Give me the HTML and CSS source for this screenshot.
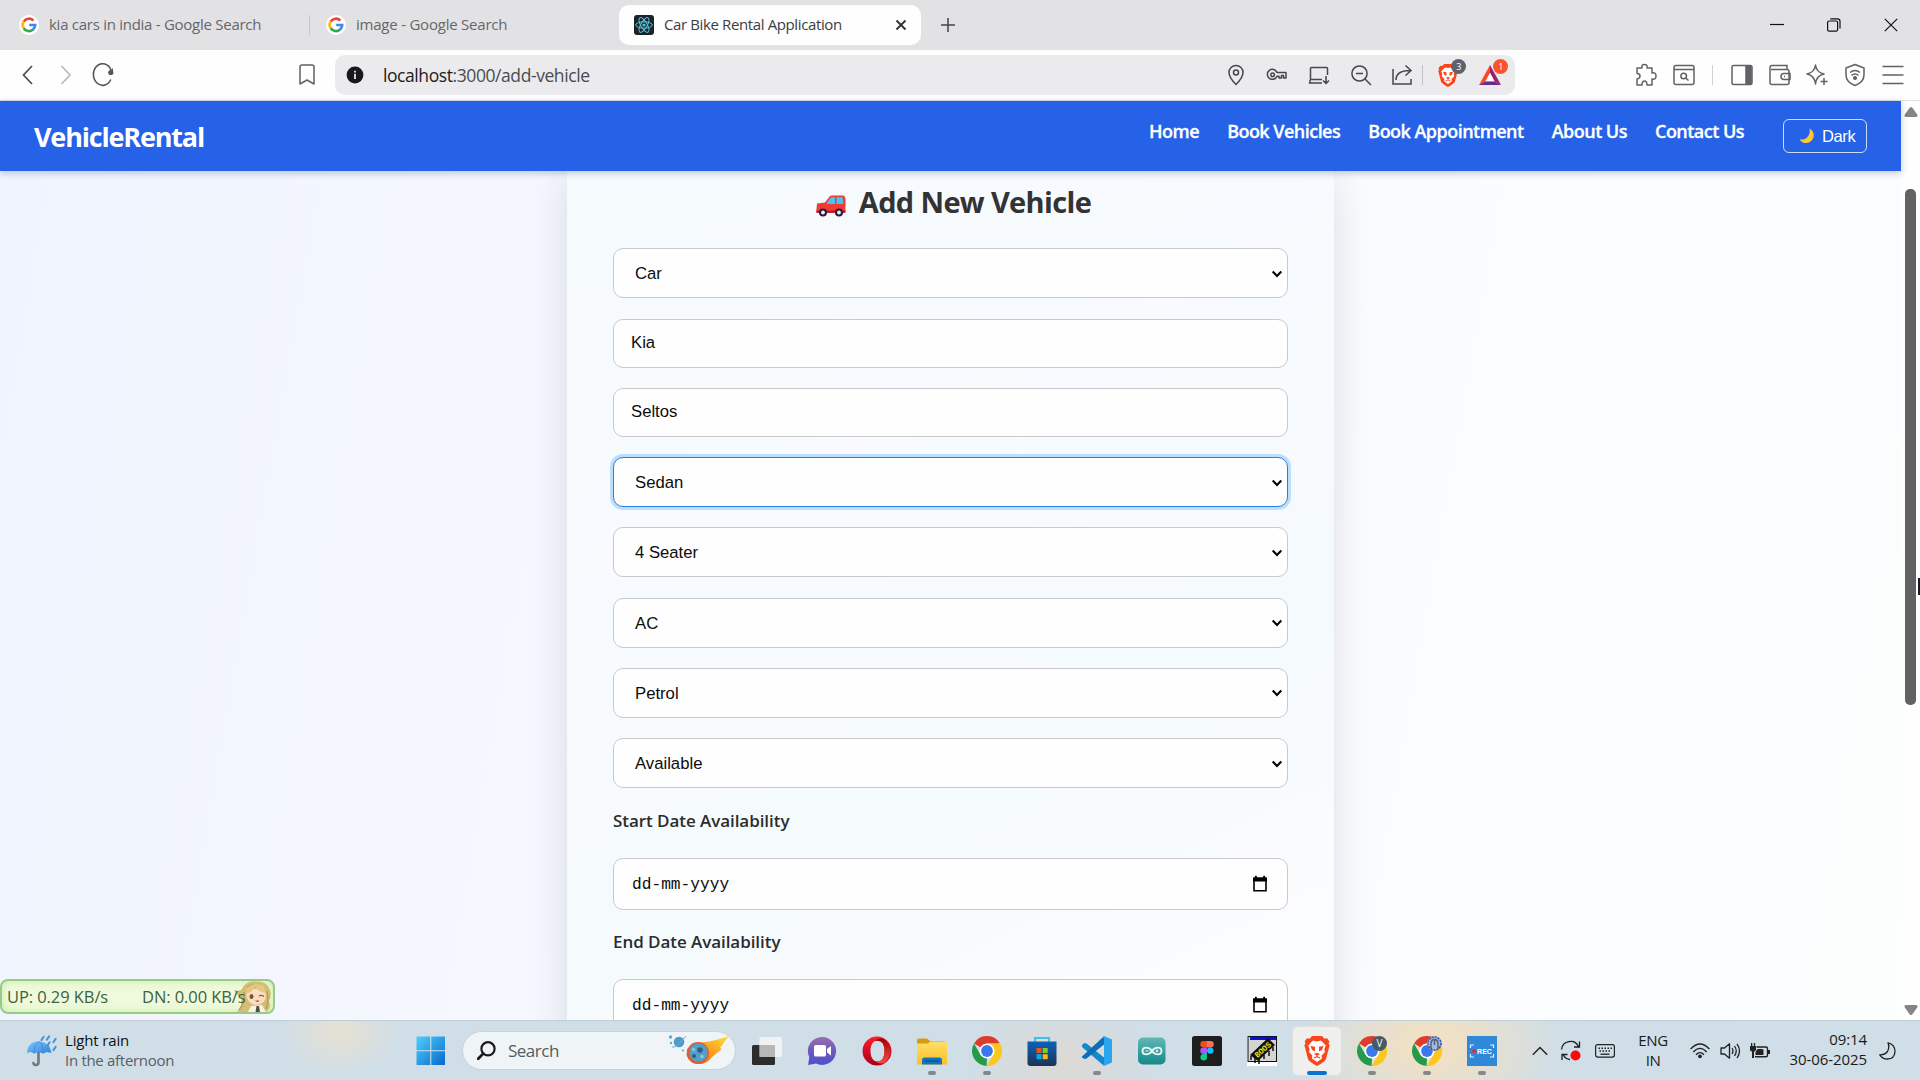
FILE: index.html
```html
<!DOCTYPE html>
<html lang="en">
<head>
<meta charset="utf-8">
<title>Car Bike Rental Application</title>
<link rel="stylesheet" href="styles.css">
</head>
<body>
<svg class="defs" width="0" height="0" aria-hidden="true">
  <defs>
    <linearGradient id="gWin" x1="0" y1="0" x2="1" y2="1"><stop offset="0" stop-color="#4fd0fb"/><stop offset="1" stop-color="#0669cc"/></linearGradient>
    <linearGradient id="gBlue" x1="0" y1="0" x2="0" y2="1"><stop offset="0" stop-color="#0d62b4"/><stop offset="1" stop-color="#1c3358"/></linearGradient>
    <linearGradient id="gChat" x1="0" y1="0" x2="0" y2="1"><stop offset="0" stop-color="#9a6cab"/><stop offset=".5" stop-color="#6a5bbd"/><stop offset="1" stop-color="#4d4fd0"/></linearGradient>
    <linearGradient id="gOpera" x1="0" y1="0" x2="0" y2="1"><stop offset="0" stop-color="#ff1b2d"/><stop offset="1" stop-color="#a70014"/></linearGradient>
    <linearGradient id="gOpera2" x1="0" y1="0" x2="0" y2="1"><stop offset="0" stop-color="#9c0000"/><stop offset="1" stop-color="#ff4b4b"/></linearGradient>
    <linearGradient id="gFolder" x1="0" y1="0" x2="0" y2="1"><stop offset="0" stop-color="#ffdf6b"/><stop offset="1" stop-color="#fbbf25"/></linearGradient>
    <linearGradient id="gArd" x1="0" y1="0" x2="0" y2="1"><stop offset="0" stop-color="#62b8b4"/><stop offset="1" stop-color="#128a88"/></linearGradient>
    <linearGradient id="gFire" x1="0" y1="1" x2="1" y2="0"><stop offset="0" stop-color="#e8552b"/><stop offset=".5" stop-color="#fb9d1e"/><stop offset="1" stop-color="#ffe23a"/></linearGradient>
    <linearGradient id="gUmb" x1="0" y1="0" x2="1" y2="1"><stop offset="0" stop-color="#7fc4fb"/><stop offset="1" stop-color="#2e83e0"/></linearGradient>
    <symbol id="google" viewBox="0 0 20 20">
      <circle cx="10" cy="10" r="10" fill="#fff"/>
      <path d="M4.7 6.6A6.2 6.2 0 0 1 14.4 5.6" fill="none" stroke="#ea4335" stroke-width="2.7"/>
      <path d="M4.7 13.3A6.2 6.2 0 0 1 4.7 6.6" fill="none" stroke="#fbbc05" stroke-width="2.7"/>
      <path d="M14 14.6A6.2 6.2 0 0 1 4.7 13.2" fill="none" stroke="#34a853" stroke-width="2.7"/>
      <path d="M10.2 10H16.2A6.1 6.1 0 0 1 13.9 14.6" fill="none" stroke="#4285f4" stroke-width="2.7"/>
    </symbol>
    <symbol id="chrome" viewBox="0 0 30 30">
      <path d="M15 15L2 7.5A15 15 0 0 1 28 7.5H15Z" fill="#dd3b2b"/>
      <path d="M2 7.5L8.5 18.8L15 22.5L14.6 30A15 15 0 0 1 2 7.5Z" fill="#26994a"/>
      <path d="M28 7.5A15 15 0 0 1 14.6 30L21.5 18.8L15 7.5Z" fill="#fdc61f"/>
      <circle cx="15" cy="15" r="7.5" fill="#fff"/><circle cx="15" cy="15" r="5.9" fill="#3a78ef"/>
    </symbol>
    <symbol id="brave" viewBox="0 0 26 30">
      <path d="M8 0H18L20.5 2.7L23 2.3L25.3 5.2L24.6 7.5L25.6 9.6L22 23Q21 25.5 13 30Q5 25.5 4 23L.4 9.6L1.4 7.5L.7 5.2L3 2.3L5.5 2.7Z" fill="#f9471d"/>
      <path d="M9 4.6L13 5.4L17 4.6L21.8 9.5L20.3 13.2L21 16L17.6 19.5L18 22.5L13 26L8 22.5L8.4 19.5L5 16L5.7 13.2L4.2 9.5Z" fill="#fff"/>
      <path d="M6.5 10L11 10.8L11 15.5L8 14ZM19.5 10L15 10.8V15.5L18 14ZM10 18L13 16.8L16 18L13 20Z" fill="#f9471d"/>
      <path d="M9.8 22L13 20.6L16.2 22" fill="none" stroke="#f9471d" stroke-width="1.2"/>
    </symbol>
    <symbol id="chev" viewBox="0 0 12 8"><path d="M1.7 1.6L6 5.9L10.3 1.6" fill="none" stroke="#000" stroke-width="2.1"/></symbol>
    <symbol id="cal" viewBox="0 0 16 18"><path d="M2 4.5V15.8H14V4.5" fill="none" stroke="#000" stroke-width="1.6"/><path d="M1 2.2H3V.8H4.8V2.2H11.2V.8H13V2.2H15V6.4H1Z"/></symbol>
  </defs>
</svg>

<div class="screen">
  <header class="tabs">
    <div class="tab tab-first"><svg class="fav"><use href="#google"/></svg><span class="t1">kia cars in india - Google Search</span></div>
    <i class="tab-sep"></i>
    <div class="tab tab-second"><svg class="fav"><use href="#google"/></svg><span class="t2">image - Google Search</span></div>
    <div class="tab tab-active">
      <svg class="fav" viewBox="0 0 20 20"><rect width="20" height="20" rx="3" fill="#1c2428"/><g fill="none" stroke="#58c4dc" stroke-width="1"><ellipse cx="10" cy="10" rx="8.3" ry="3.2"/><ellipse cx="10" cy="10" rx="8.3" ry="3.2" transform="rotate(60 10 10)"/><ellipse cx="10" cy="10" rx="8.3" ry="3.2" transform="rotate(120 10 10)"/></g><circle cx="10" cy="10" r="1.6" fill="#58c4dc"/></svg>
      <span class="t3">Car Bike Rental Application</span>
      <svg class="tab-x" width="12" height="12" viewBox="0 0 12 12"><path d="M1.5 1.5L10.5 10.5M10.5 1.5L1.5 10.5" stroke="#333" stroke-width="1.9"/></svg>
    </div>
    <svg class="plus" width="14" height="14" viewBox="0 0 14 14"><path d="M7 0V14M0 7H14" stroke="#444" stroke-width="1.5"/></svg>
    <div class="win">
      <svg width="14" height="14" viewBox="0 0 14 14"><path d="M0 6.5H14" stroke="#111" stroke-width="1.2"/></svg>
      <svg width="14" height="14" viewBox="0 0 14 14" fill="none" stroke="#111" stroke-width="1.2"><rect x=".6" y="3" width="10" height="10.2" rx="1.5"/><path d="M3.3 .8H10.5Q13 .8 13 3.3V10.4"/></svg>
      <svg width="14" height="14" viewBox="0 0 14 14"><path d="M.8 .8L13.2 13.2M13.2 .8L.8 13.2" stroke="#111" stroke-width="1.2"/></svg>
    </div>
  </header>

  <div class="toolbar">
    <div class="navicons">
      <svg width="12" height="20" viewBox="0 0 12 20"><path d="M10 1L1.5 10L10 19" fill="none" stroke="#494c50" stroke-width="1.7"/></svg>
      <svg width="12" height="20" viewBox="0 0 12 20"><path d="M1.5 1L10 10L1.5 19" fill="none" stroke="#bbb" stroke-width="1.7"/></svg>
      <svg width="22" height="24" viewBox="0 0 22 24"><path d="M18.800 16.500A9.200 10.800 0 1 1 19 7" fill="none" stroke="#55585c" stroke-width="1.6"/><circle cx="18.800" cy="9.500" r="2.600" fill="#55585c"/><path d="M21 5V10H16Z" fill="#55585c"/></svg>
    </div>
    <svg class="bookmark" width="16" height="22" viewBox="0 0 16 22"><path d="M1 3Q1 1 3 1H13Q15 1 15 3V20L8 16L1 20Z" fill="none" stroke="#606266" stroke-width="1.5" stroke-linejoin="round"/></svg>
    <div class="url">
      <svg width="18" height="18" viewBox="0 0 18 18"><circle cx="9" cy="9" r="8.4" fill="#18191d"/><path d="M9 7.8V13M9 4.8V6.4" stroke="#e6e6e8" stroke-width="1.8"/></svg>
      <span class="addr"><b>localhost</b>:3000/add-vehicle</span>
      <div class="urlicons">
        <svg width="22" height="22" viewBox="0 0 22 22"><path d="M11 20.5Q4 13.5 4 8.5A7 7 0 0 1 18 8.5Q18 13.5 11 20.5Z"/><circle cx="11" cy="8.6" r="2.5"/></svg>
        <svg width="22" height="22" viewBox="0 0 22 22"><path d="M11 8.5H20V14H17.5V11.5H15.5V14H13V12.2H11A5 5 0 1 1 11 8.5Z" stroke-linejoin="round"/><circle cx="6.6" cy="10.8" r="1.8"/></svg>
        <svg width="22" height="22" viewBox="0 0 22 22"><path d="M19.5 11V4.5Q19.5 3.5 18.500 3.500H3.500Q2.500 3.500 2.500 4.500V15.500H14M.8 19H14M2 16V19M18 12V19M15 16.500L18 19.500L21 16.500"/></svg>
        <svg width="22" height="22" viewBox="0 0 22 22"><circle cx="9.500" cy="9.500" r="7.600"/><path d="M15 15L21 21M6 9.500H13"/></svg>
        <svg width="22" height="22" viewBox="0 0 22 22"><path d="M2 5V20H20V15M5 16Q5 6.500 19 6.500M14.500 1.500L20 6.500L14.500 11.500"/></svg>
      </div>
      <i class="url-sep"></i>
      <div class="badge-wrap brv"><svg width="20" height="25"><use href="#brave"/></svg><em class="badge grey">3</em></div>
      <div class="badge-wrap bat"><svg width="22" height="20" viewBox="0 0 22 20"><path d="M11 0L0 20L6.500 16.200L11 8Z" fill="#ff4724"/><path d="M11 0L22 20L15.500 16.200L11 8Z" fill="#9e1f63"/><path d="M0 20H22L15.500 16.200H6.500Z" fill="#662d91"/><path d="M11 8L6.500 16.200H15.500Z" fill="#fff"/></svg><em class="badge red">1</em></div>
    </div>
    <div class="exticons">
      <svg width="22" height="24" viewBox="0 0 22 24"><path d="M2 5H7Q6 1.500 9.500 1.500T12 5H17V10Q21 9 21 13T17 16V22H12Q12 18 9.500 18T7 22H2V16Q5 15.500 5 13T2 10.500Z" stroke-linejoin="round"/></svg>
      <svg width="22" height="22" viewBox="0 0 22 22"><rect x="1" y="1.500" width="20" height="19" rx="2"/><path d="M1 5.500H21M12.800 14L15.500 16.500"/><circle cx="10.700" cy="12" r="2.800"/></svg>
      <i class="ext-sep"></i>
      <svg width="22" height="22" viewBox="0 0 22 22"><rect x="1" y="1.500" width="20" height="19" rx="1.500"/><path d="M15 2H20V20H15Z" fill="#606266"/></svg>
      <svg width="22" height="22" viewBox="0 0 22 22"><path d="M18 5.500V1.500H3Q1 1.500 1 3.500V18.500Q1 20.500 3 20.500H18Q20 20.500 20 18.500V7.500Q20 5.500 18 5.500H2"/><path d="M21 9.500H15Q12 9.500 12 12.500T15 15.500H21ZM15 12.500H16"/></svg>
      <svg width="22" height="22" viewBox="0 0 22 22"><path d="M9.500 1Q10.500 8.500 18 10Q10.500 11.500 9.500 20Q8.500 11.500 1 10Q8.500 8.500 9.500 1ZM18 14V21M14.500 17.500H21.500" stroke-linejoin="round"/></svg>
      <svg width="22" height="24" viewBox="0 0 22 24"><path d="M11 1.500L20 5V12Q20 19 11 22.500Q2 19 2 12V5Z" stroke-linejoin="round"/><path d="M6 9.500Q11 5.500 16 9.500M7.500 12.300Q11 9.500 14.500 12.300"/><circle cx="11" cy="15" r="1.300" fill="#606266"/></svg>
      <svg width="22" height="20" viewBox="0 0 22 20"><path d="M.5 1.500H21.500M.5 10H21.500M.5 18.500H21.500"/></svg>
    </div>
  </div>

  <div class="viewport">
    <div class="page">
      <nav class="navbar">
        <div class="brand">VehicleRental</div>
        <div class="links"><a>Home</a><a>Book Vehicles</a><a>Book Appointment</a><a>About Us</a><a>Contact Us</a></div>
        <div class="theme"><svg width="16" height="16" viewBox="0 0 16 16"><path d="M10.500 .5Q16.500 4.500 14 10.500Q10.500 16.500 4 14.500Q1.500 13.500 .8 11.200Q6 12.500 9 8.500Q11.500 5 10.500 .5Z" fill="#fcc934"/></svg><span>Dark</span></div>
      </nav>
      <main class="content">
        <form class="card">
          <h1><svg width="30" height="22" viewBox="0 0 30 22"><path d="M1 8.500L9 7.500L14 1Q14.500 .5 16 .5H27Q29 .5 29.500 4V16L28.500 18H1Q.3 18 .3 16Z" fill="#f03a36"/><path d="M11 7.800L15 2.300H19V9H11ZM20.500 2.300H26.500L27.500 9H20.500Z" fill="#4cc5ee"/><path d="M.5 15.500H29.500V17.800H.5Z" fill="#b8202c"/><circle cx="7" cy="17.500" r="4" fill="#2c1a3a"/><circle cx="23" cy="17.500" r="4" fill="#2c1a3a"/><circle cx="7" cy="17.500" r="1.900" fill="#f2eef8"/><circle cx="23" cy="17.500" r="1.900" fill="#f2eef8"/></svg><span>Add New Vehicle</span></h1>
          <div class="field sel"><span>Car</span><svg><use href="#chev"/></svg></div>
          <div class="field txt first"><span>Kia</span></div>
          <div class="field txt"><span>Seltos</span></div>
          <div class="field sel focus"><span>Sedan</span><svg><use href="#chev"/></svg></div>
          <div class="field sel"><span>4 Seater</span><svg><use href="#chev"/></svg></div>
          <div class="field sel"><span>AC</span><svg><use href="#chev"/></svg></div>
          <div class="field sel"><span>Petrol</span><svg><use href="#chev"/></svg></div>
          <div class="field sel"><span>Available</span><svg><use href="#chev"/></svg></div>
          <label class="start-label">Start Date Availability</label>
          <div class="field date"><span>dd-mm-yyyy</span><svg><use href="#cal"/></svg></div>
          <label>End Date Availability</label>
          <div class="field date"><span>dd-mm-yyyy</span><svg><use href="#cal"/></svg></div>
        </form>
      </main>
    </div>
    <div class="scrollbar">
      <svg width="14" height="10" viewBox="0 0 14 10"><path d="M7 0Q8 0 9 1.500L13.500 8Q14 10 12 10H2Q0 10 .5 8L5 1.500Q6 0 7 0Z" fill="#858585"/></svg>
      <i class="thumb"></i>
      <svg width="14" height="10" viewBox="0 0 14 10"><path d="M7 10Q8 10 9 8.500L13.500 2Q14 0 12 0H2Q0 0 .5 2L5 8.500Q6 10 7 10Z" fill="#858585"/></svg>
    </div>
  </div>

  <footer class="taskbar">
    <div class="weather">
      <svg width="32" height="32" viewBox="0 0 32 32"><path d="M12.500 17V27Q12.500 30 9.800 30T7.500 27" fill="none" stroke="#777" stroke-width="2.600"/><path d="M1 18Q2 6 13 6.500Q24 7 25.500 18L21 17L17 18.500L12.500 17L8 18.500L4.500 17Z" fill="url(#gUmb)"/><path d="M8 18.500Q8 9 13 6.500Q17.500 9 17 18.500" fill="none" stroke="#3c87d8" stroke-width=".7"/><path d="M17.500 2L15.500 5M23 1.500L21 4.500M29.500 4L27.500 7M23.500 7.500L21.500 10.500M29.500 12L27.500 15" stroke="#4b93d8" stroke-width="2.200" stroke-linecap="round"/></svg>
      <div class="wtext"><span class="w1">Light rain</span><span class="w2">In the afternoon</span></div>
    </div>
    <svg class="start" width="30" height="30" viewBox="0 0 30 30"><path d="M.5 .5H14.200V14.200H.5ZM15.300 .5H29V14.200H15.300ZM.5 15.300H14.200V29H.5ZM15.300 15.300H29V29H15.300Z" fill="url(#gWin)"/></svg>
    <div class="search">
      <svg width="19" height="19" viewBox="0 0 19 19"><circle cx="11" cy="7.800" r="6.600" fill="none" stroke="#1b1b1b" stroke-width="2.200"/><path d="M6.200 12.600L1.200 17.800" stroke="#1b1b1b" stroke-width="2.800" stroke-linecap="round"/></svg>
      <span>Search</span>
      <svg class="meteor" width="62" height="32" viewBox="0 0 62 32"><path d="M19 14Q26 7 38 7Q46 6 61 1Q57 6 52 13L54 14Q49 18 44 22Q39 29 32 29Q21 29 18.500 20Z" fill="url(#gFire)"/><circle cx="30" cy="18" r="11" fill="#e25a30"/><circle cx="30.500" cy="17.500" r="9.200" fill="#559fc4"/><circle cx="32" cy="15" r="2.800" fill="#315c86"/><circle cx="26" cy="21" r="2" fill="#315c86"/><circle cx="34" cy="21.500" r="1.700" fill="#8bd0e6"/><circle cx="25.500" cy="14.500" r="2" fill="#80bfdf"/><circle cx="11" cy="7" r="5.300" fill="#4c9bc8"/><path d="M4 12Q7 14 18 1" fill="none" stroke="#6eabca" stroke-width="1"/><circle cx="2.500" cy="2" r="1.700" fill="#5faace"/><circle cx="3" cy="8" r="1.200" fill="#5faace"/><circle cx="15" cy="15.500" r="1.100" fill="#5faace"/></svg>
    </div>
    <div class="apps">
      <div class="app"><svg width="30" height="30" viewBox="0 0 30 30"><rect y="9" width="23" height="20" rx="1.500" fill="#2c2c2c"/><rect x="7.500" y="1" width="22.500" height="20" rx="1.500" fill="#fafafa" opacity=".72"/><path d="M7.500 9H23V21H7.500Z" fill="#b4b4b4" opacity=".8"/></svg></div>
      <div class="app"><svg width="30" height="30" viewBox="0 0 30 30"><path d="M15 1A14 14 0 1 1 9 27.600L1.200 29L2.200 21A14 14 0 0 1 15 1Z" fill="url(#gChat)"/><rect x="7" y="9" width="12" height="11.500" rx="1.500" fill="#fff"/><path d="M20 13L24 10V19.500L20 16.500Z" fill="#fff"/></svg></div>
      <div class="app"><svg width="30" height="30" viewBox="0 0 30 30"><path fill-rule="evenodd" d="M15 .5A14.500 14.500 0 0 1 15 29.500A14.500 14.500 0 0 1 15 .5ZM15.500 4.500C11 4.500 8.500 9 8.500 15S11 25.500 15.500 25.500S22.500 21 22.500 15S20 4.500 15.500 4.500Z" fill="url(#gOpera)"/><path d="M13 5Q17 1.500 22 3A14.500 14.500 0 0 1 22 27Q17 28.500 13 25Q22.500 27 22.500 15T13 5Z" fill="url(#gOpera2)"/></svg></div>
      <div class="app run"><svg width="30" height="30" viewBox="0 0 30 30"><path d="M0 4Q0 2.500 1.500 2.500H10L13 5H28V8H0Z" fill="#d69c10"/><path d="M0 7.500H11L13.500 5.500H30V28.500H0Z" fill="url(#gFolder)"/><path d="M5 28.500V24Q5 21.500 7.500 21.500H22.500Q25 21.500 25 24V28.500Z" fill="#1272c0"/><path d="M8 25H22" stroke="#064b86"/></svg></div>
      <div class="app run"><svg width="30" height="30"><use href="#chrome"/></svg></div>
      <div class="app"><svg width="30" height="30" viewBox="0 0 30 30"><path d="M8 7V2H22V7" fill="none" stroke="#3cc0f0" stroke-width="2.200"/><path d="M.5 5.500H29.500V27Q29.500 30 26.500 30H3.500Q.5 30 .5 27Z" fill="url(#gBlue)"/><path d="M9.500 12H14.500V17H9.500Z" fill="#f1511b"/><path d="M15.700 12H20.700V17H15.700Z" fill="#80cc28"/><path d="M9.500 18.200H14.500V23.200H9.500Z" fill="#00adef"/><path d="M15.700 18.200H20.700V23.200H15.700Z" fill="#fbbc09"/></svg></div>
      <div class="app run"><svg width="30" height="30" viewBox="0 0 30 30"><path d="M0 9L2.500 7L4.500 7.500L22 21.500V28L21 29L0 11Z" fill="#1587cf"/><path d="M0 20.500L22 .3V8.500L4.500 22.500L2.500 23L0 21.500Z" fill="#0d6db5"/><path d="M22 0L30 3.500V26.500L22 30L20.500 29L22 27.500V2.500L20.500 1Z" fill="#2aa5ee"/></svg></div>
      <div class="app"><svg width="30" height="30" viewBox="0 0 30 30"><rect x="1" y="1.500" width="27.500" height="27" rx="5" fill="url(#gArd)"/><path d="M15 15C12 10.500 5.500 10.500 5.500 15S12 19.500 15 15S24.500 10.500 24.500 15S18 19.500 15 15Z" fill="none" stroke="#eafafa" stroke-width="1.800"/><path d="M8.500 15H11.500M18.500 15H21.500M20 13.500V16.500" stroke="#eafafa"/></svg></div>
      <div class="app"><svg width="30" height="30" viewBox="0 0 30 30"><rect width="30" height="30" rx="2.500" fill="#1e1e1e"/><path d="M15 5H11.500A3.200 3.200 0 0 0 11.500 11.400H15Z" fill="#f24e1e"/><path d="M15 5H18.500A3.200 3.200 0 0 1 18.500 11.400H15Z" fill="#ff7262"/><path d="M15 11.400H11.500A3.200 3.200 0 0 0 11.500 17.900H15Z" fill="#a259ff"/><circle cx="18.300" cy="14.600" r="3.200" fill="#1abcfe"/><path d="M15 17.900H11.500A3.300 3.300 0 1 0 15 21.200Z" fill="#0acf83"/></svg></div>
      <div class="app"><svg width="30" height="30" viewBox="0 0 30 30"><rect width="30" height="30" fill="#fff"/><rect x="1" y=".5" width="28.500" height="25" fill="#d4d4d4" stroke="#111"/><path d="M3 .8H29V4H3Z" fill="#0710d8"/><path d="M3 19L21 2L28 9L11 25Z" fill="#111"/><path d="M4 20V24M8 22V27M12 23V28M17 19V23M22 15V20M26 11V15" stroke="#111" stroke-width="1.500"/><text class="chip" x="-9.500" y="3" transform="translate(15.500 13.500) rotate(-42)">BOOS</text></svg></div>
      <div class="app active"><svg width="26" height="30"><use href="#brave"/></svg></div>
      <div class="app run"><svg width="30" height="30" viewBox="0 0 30 30"><use href="#chrome" width="30" height="30"/><circle cx="22.500" cy="7.500" r="7.500" fill="#445a64"/><text class="av" x="22.500" y="10.800">V</text></svg></div>
      <div class="app run"><svg width="30" height="30" viewBox="0 0 30 30"><use href="#chrome" width="30" height="30"/><circle cx="22.500" cy="7.500" r="7.300" fill="#a9b8dc"/><circle cx="22.500" cy="7.500" r="6.500" fill="none" stroke="#2f55ad" stroke-width="1.600" stroke-dasharray="2 1"/><path d="M19 13V8Q19 3.500 22.500 3.500T26 8V13M22.500 3V9" fill="none" stroke="#52617f" stroke-width="1.500"/></svg></div>
      <div class="app run"><svg width="30" height="30" viewBox="0 0 30 30"><rect width="30" height="30" fill="#3088d8"/><path d="M3.500 12V9H7M23 9H26.500V12M3.500 18V21H7M23 21H26.500V18" fill="none" stroke="#e6f1fb" stroke-width="1.200"/><circle cx="7" cy="15" r="2.100" fill="#e62d2d"/><text class="rec" x="17.500" y="17.500">REC</text></svg></div>
    </div>
    <div class="tray">
      <svg width="16" height="10" viewBox="0 0 16 10"><path d="M.8 8.800L8 1.500L15.200 8.800" fill="none" stroke="#222" stroke-width="1.400"/></svg>
      <svg class="sync" width="22" height="22" viewBox="0 0 22 22"><path d="M1.500 9.500A9 9 0 0 1 18.500 6.500M19.500 1.500V7H14M10 19.500A9 9 0 0 1 3 14.500M2 20V14.500H7.500" fill="none" stroke="#1c1c1c" stroke-width="1.300"/><circle cx="15.500" cy="15.500" r="5" fill="#fa0a0a"/></svg>
      <svg class="kbd" width="20" height="14" viewBox="0 0 20 14"><rect x=".6" y=".6" width="18.800" height="12.500" rx="2" fill="none" stroke="#222" stroke-width="1.200"/><path d="M3.500 4.200H17M4.500 7H16" stroke="#222" stroke-width="1.500" stroke-dasharray="1.500 1.500"/><path d="M5.500 10.200H14.500" stroke="#222" stroke-width="1.300"/></svg>
      <div class="lang"><span>ENG</span><span>IN</span></div>
      <svg class="wifi" width="20" height="16" viewBox="0 0 20 16"><g fill="none" stroke="#222" stroke-width="1.300"><path d="M.6 6Q10-4 19.400 6M3.300 9Q10 1.700 16.700 9M6 11.800Q10 7.300 14 11.800"/></g><circle cx="10" cy="13.300" r="1.900" fill="#222"/></svg>
      <svg class="vol" width="21" height="18" viewBox="0 0 21 18"><g fill="none" stroke="#222" stroke-width="1.300"><path d="M1 6H4.500L9.500 1.800V16.200L4.500 12H1Z" stroke-linejoin="round"/><path d="M12 6Q14 9 12 12M14.500 4Q18 9 14.500 14M17 1.800Q22 9 17 16.200"/></g></svg>
      <svg class="batt" width="20" height="16" viewBox="0 0 20 16"><path d="M6.500 4H16Q17.500 4 17.500 5.500V12Q17.500 13.800 16 13.800H5" fill="none" stroke="#222" stroke-width="1.400"/><path d="M7.500 6H12.500L13.500 7V12H5.500V9ZM18 7H20V11H18ZM0 3H6V6.500Q6 8.500 4 8.500V15H2V8.500Q0 8.500 0 6.500ZM1 0H2.300V3H1ZM3.800 0H5.100V3H3.800Z" fill="#222"/></svg>
      <div class="clock"><span class="c1">09:14</span><span class="c2">30-06-2025</span></div>
      <svg width="17" height="18" viewBox="0 0 17 18"><path d="M9 .8Q16 2.500 16 9.500Q15.500 17 8.500 17Q3.500 17 .8 12.800Q6 13 8.500 9.500Q10.800 5.500 9 .8Z" fill="none" stroke="#222" stroke-width="1.300" stroke-linejoin="round"/></svg>
    </div>
  </footer>

  <div class="meter">
    <span class="m1">UP: 0.29 KB/s</span><span class="m2">DN: 0.00 KB/s</span>
    <svg class="girl" width="40" height="32" viewBox="0 0 40 32"><path d="M4 31Q10 26 8 16Q3 14 1 9Q7 11 9 8Q13-1 24 .5Q34 0 37 9Q39 14 36 20Q39 27 33 31Z" fill="#d5bd73"/><path d="M6 29Q12 22 11 11M33 28Q36 20 34 10M14 6Q22 1 31 8" fill="none" stroke="#b59a55" stroke-width="1.300"/><path d="M13 12Q16 7 24 8Q32 8 33 14Q33 23 23 24Q14 23 13 12Z" fill="#f9dec1"/><path d="M13 13Q20 11 22 5Q25 11 33 12L31 5Q21 0 14 7Z" fill="#e0ca82"/><ellipse cx="18.500" cy="15.500" rx="2" ry="2.500" fill="#7a5630"/><path d="M26 15Q28.500 13.500 31 15.500" fill="none" stroke="#8a6040" stroke-width="1.300"/><path d="M22 19.500H26.500Q25 22.500 22 19.500Z" fill="#dd4136"/><path d="M18 25L29 24L33 31H15Z" fill="#f5f3e5"/><path d="M23.500 25H26L27 31H22.500Z" fill="#4a5142"/></svg>
  </div>
  <i class="cursor"></i>
</div>
</body>
</html>
```
FILE: styles.css
```css
* { box-sizing: border-box; }
html, body { margin: 0; padding: 0; overflow: hidden; }
body { font-family: "Open Sans", "Noto Sans", sans-serif; color: #222; }
svg { display: block; flex: none; }
i, em { font-style: normal; }
span, a, label { white-space: nowrap; }
.defs { position: absolute; }
.screen { position: relative; width: 1920px; height: 1080px; display: flex; flex-direction: column; overflow: hidden; }

/* Tab strip */
.tabs { height: 50px; background: #e2e2e4; display: flex; align-items: center; font-size: 15px; color: #65676b; }
.tab { display: flex; align-items: center; gap: 10px; height: 40px; }
.tab span { padding-bottom: 2px; }
.tab-first { width: 309px; padding-left: 19px; }
.tab-second { width: 309px; padding-left: 16px; }
.tab-active { width: 302px; padding-left: 15px; background: #fefefe; border-radius: 10px; color: #3b3d41; }
.fav { width: 20px; height: 20px; }
.tab-sep { width: 1px; height: 20px; background: #c8c8ca; }
.tab-x { margin-left: auto; margin-right: 14px; }
.t1 { letter-spacing: -0.27px; }
.t2 { letter-spacing: -0.22px; }
.t3 { letter-spacing: -0.38px; }
.plus { margin-left: 20px; }
.win { margin-left: auto; margin-right: 22px; display: flex; gap: 43px; }

/* Address bar */
.toolbar { height: 51px; background: #fefefe; border-bottom: 1px solid #dcdfe8; display: flex; align-items: center; }
.navicons { width: 299px; padding-left: 22px; display: flex; align-items: center; gap: 26px; }
.navicons svg:last-child { margin-left: -6px; }
.bookmark { margin-right: 20px; }
.url { flex: none; width: 1180px; height: 40px; border-radius: 10px; background: #ebebed; display: flex; align-items: center; padding-left: 11px; }
.addr { flex: none; width: 841.5px; margin-left: 19px; font-size: 17.5px; letter-spacing: -0.42px; color: #4a4c50; padding-bottom: 1px; }
.addr b { font-weight: 400; color: #1b1c20; }
.urlicons { flex: none; display: flex; gap: 19.7px; }
.urlicons svg { fill: none; stroke: #45484c; stroke-width: 1.5; }
.url-sep { flex: none; width: 1px; height: 20px; background: #c3c3c6; margin: 0 15px 0 9px; }
.badge-wrap { flex: none; position: relative; width: 41px; }
.badge { position: absolute; top: -4px; right: 13px; width: 15px; height: 15px; border-radius: 8px; color: #fff; font-size: 9px; line-height: 15px; text-align: center; }
.bat { width: 35px; }
.bat .badge { right: 6px; top: -6px; }
.grey { background: #5d6270; }
.red { background: #fb542b; }
.exticons { display: flex; align-items: center; margin-left: 120px; gap: 15.9px; }
.exticons svg { fill: none; stroke: #606266; stroke-width: 1.5; }
.ext-sep { width: 1px; height: 20px; background: #d2d2d4; margin: 0 2px 0 1px; }

/* Web page */
.viewport { height: 919px; display: flex; background: #fefefe; }
.page { width: 1901px; display: flex; flex-direction: column; background: linear-gradient(100deg, #eff4fe 0%, #f6f8fe 35%, #fbfcfe 75%, #fcfdfd 100%); }
.navbar { position: relative; z-index: 1; height: 70px; background: #2562e8; display: flex; align-items: center; padding: 0 34px; color: #fff; box-shadow: 0 2px 7px rgba(30, 50, 100, .28); }
.brand { font-size: 27px; font-weight: 700; letter-spacing: -1.18px; line-height: 36px; padding-top: 2px; }
.links { margin-left: auto; margin-right: 39px; display: flex; gap: 28.1px; font-size: 18px; font-weight: 600; line-height: 24px; margin-top: -10px; }
.links a { letter-spacing: -0.53px; -webkit-text-stroke: .3px #fff; }
.theme { width: 84px; height: 34px; border: 1px solid #cfdcf9; border-radius: 6px; display: flex; align-items: center; padding-left: 15px; gap: 7px; font: 16.5px "Liberation Sans", Arial, sans-serif; letter-spacing: -.4px; }
.content { flex: 1; min-height: 0; overflow: hidden; display: flex; }
.card { width: 767px; height: 1000px; margin-left: 567px; padding: 7px 46px 0; background: linear-gradient(155deg, #f5fbfd 0%, #f8fafe 30%, #f5fafd 60%, #fbfcfe 80%); box-shadow: 0 8px 36px rgba(40, 40, 70, .14); display: flex; flex-direction: column; gap: 20.2px; }
.card h1 { flex: none; margin: 0; height: 50px; display: flex; align-items: center; justify-content: center; gap: 13px; padding-left: 6px; font-size: 29px; font-weight: 700; color: #333; }
.card h1 span { letter-spacing: -0.65px; padding-bottom: 4px; }
.card h1 svg { margin-top: 5px; }
.field { flex: none; width: 675px; height: 50px; border: 1px solid #c9c9cb; border-radius: 10px; background: #fefefe; display: flex; align-items: center; justify-content: space-between; font: 16.7px "Liberation Sans", Arial, sans-serif; color: #0c0c0c; }
.sel { padding: 0 4px 0 21px; }
.sel span { padding-top: 2px; }
.sel svg { width: 12px; height: 8px; margin-top: 1px; }
.txt { height: 49px; padding: 0 17px 1px; }
.first { margin-top: .5px; }
.focus { border-color: #2b7de0; box-shadow: 0 0 0 3px #bedffa; }
.card label { flex: none; height: 30px; line-height: 30px; font-size: 17px; font-weight: 600; color: #2b2c2e; letter-spacing: -0.06px; margin-top: -3px; margin-bottom: 2px; }
.card .start-label { margin-top: -2.500px; }
.date { height: 52px; padding: 0 19px 0 18px; font-family: "Liberation Mono", "Courier New", monospace; font-size: 16.2px; }
.date span { padding-top: 2px; }
.date svg { width: 16px; height: 18px; }
.scrollbar { width: 19px; display: flex; flex-direction: column; align-items: center; padding: 6px 0 5px; }
.thumb { width: 11px; height: 516px; margin: 72px 0 auto; border-radius: 5px; background: #626262; }

/* Taskbar */
.taskbar { height: 60px; border-top: 1px solid #c0ced6; display: flex; align-items: center; background: radial-gradient(ellipse 60px 42px at 340px 12px, #e6e1d2, rgba(230, 225, 210, 0)), radial-gradient(ellipse 100px 60px at 1060px 40px, #ddd9d4, rgba(221, 217, 212, 0)), radial-gradient(ellipse 130px 90px at 1430px 25px, #efe0c6 20%, rgba(239, 224, 198, 0)), #d0dee7; }
.weather { width: 416px; padding-left: 26px; display: flex; align-items: center; gap: 7px; }
.wtext { display: flex; flex-direction: column; font-size: 15px; line-height: 20px; color: #111; padding-bottom: 2px; }
.w1 { letter-spacing: -0.15px; }
.w2 { letter-spacing: -0.3px; color: #585f65; }
.search { width: 274px; height: 39px; margin-left: 16px; border-radius: 20px; background: #eff4f7; border: 1px solid #c7d2d9; display: flex; align-items: center; padding: 0 5px 0 14px; font-size: 17px; color: #555c60; }
.search span { margin-left: 12px; letter-spacing: -0.5px; }
.meteor { margin-left: auto; }
.apps { display: flex; gap: 7.05px; margin-left: 6.5px; }
.app { position: relative; width: 48px; height: 48px; display: flex; align-items: center; justify-content: center; border-radius: 5px; }
.app.run::after, .app.active::after { content: ""; position: absolute; bottom: 0; left: 20px; width: 8px; height: 4px; border-radius: 2px; background: #858788; }
.app.active { background: #efefed; box-shadow: 0 0 0 1px #e0dfdb; }
.app.active::after { left: 14px; width: 20px; background: #0c74cf; }
.chip { font: 700 8px "Liberation Mono", monospace; fill: #e4e021; }
.av { font: 10px "Open Sans", sans-serif; fill: #fff; text-anchor: middle; }
.rec { font: 700 7px "Liberation Sans", sans-serif; fill: #fff; text-anchor: middle; }
.tray { margin-left: auto; margin-right: 24px; display: flex; align-items: center; font-size: 15px; line-height: 20px; color: #1b1b1b; }
.sync { margin-left: 12px; }
.kbd { margin-left: 13px; }
.lang { width: 60px; margin-left: 8px; display: flex; flex-direction: column; align-items: center; letter-spacing: -0.4px; padding-bottom: 2px; }
.wifi { margin-left: 7px; }
.vol { margin-left: 10px; }
.batt { margin-left: 9px; }
.clock { width: 97px; margin-right: 12px; display: flex; flex-direction: column; align-items: flex-end; letter-spacing: -0.08px; padding-bottom: 3px; }

/* Floating bandwidth meter */
.meter { position: absolute; left: 0; top: 979px; width: 275px; height: 35px; border: 2px solid #9aca86; border-radius: 8px; background: #effadc; box-shadow: inset 0 0 8px #c4ecab; display: flex; align-items: center; font-size: 16.5px; color: #3c6440; padding-left: 5px; overflow: hidden; }
.m1, .m2 { position: relative; z-index: 1; letter-spacing: -0.08px; }
.m1 { width: 135px; }
.girl { position: absolute; right: 0; top: 0; }
.cursor { position: absolute; left: 1918px; top: 578px; width: 2px; height: 17px; background: #1b1626; }
```
